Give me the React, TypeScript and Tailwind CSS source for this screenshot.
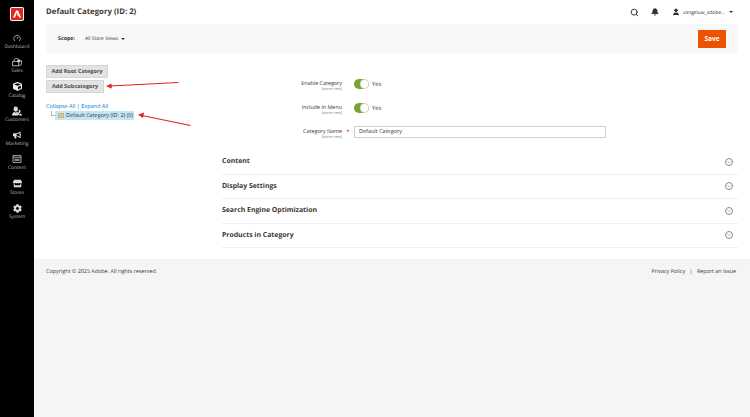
import { Search, Bell, User, ChevronDown } from 'lucide-react';
import { FaCog, FaBullhorn, FaCube, FaStore } from 'react-icons/fa';
import type { ReactNode } from 'react';

const CustomersIcon = () => (
  <svg width="10" height="10" viewBox="0 0 16 16" fill="#ddd">
    <path d="M6 1a3.400 3.400 0 0 1 3.400 3.600C9.400 7 8 8.800 6 8.800S2.600 7 2.600 4.600A3.400 3.400 0 0 1 6 1zM0 15c0-3.400 2.400-5 4.400-5.400l1.600 1 1.600-1c2 .4 3.400 1.600 3.800 3.400L10 15z" />
    <path d="M11 5.500a2.600 2.600 0 0 1 2.600 2.800c0 1.800-1.100 3.200-2.600 3.200-.5 0-1-.2-1.400-.5 1-.8 1.400-2.200 1.400-5.500zM12 12l1 .1c1.400.4 2.600 1.200 3 2.900h-4.400z" />
  </svg>
);

const navItems: { label: string; icon: ReactNode }[] = [
  {
    label: 'Dashboard',
    icon: (
      <svg width="8" height="8" viewBox="0 0 16 16" fill="none" stroke="#aaa" strokeWidth="1.800">
        <path d="M3.500 14a6.500 6.500 0 1 1 9 0M8 10l1.500-4" />
      </svg>
    ),
  },
  {
    label: 'Sales',
    icon: (
      <svg width="10" height="9" viewBox="0 0 18 16" fill="none" stroke="#ccc" strokeWidth="1.500">
        <path d="M1 6h11v8H1zM12 7l5-2.500v7L12 14M4 6a4 4 0 0 1 8-3" />
        <circle cx="12" cy="5" r="3" fill="#ccc" stroke="none" />
      </svg>
    ),
  },
  { label: 'Catalog', icon: <FaCube size={9} color="#eee" /> },
  { label: 'Customers', icon: <CustomersIcon /> },
  { label: 'Marketing', icon: <FaBullhorn size={8} color="#ddd" /> },
  {
    label: 'Content',
    icon: (
      <svg width="10" height="8" viewBox="0 0 16 14" fill="none" stroke="#ccc" strokeWidth="1.400">
        <path d="M1 1h14v12H1zM1 4h14" />
        <path d="M3.500 6.500h9v4h-9z" fill="#888" stroke="none" />
      </svg>
    ),
  },
  { label: 'Stores', icon: <FaStore size={9} color="#ddd" /> },
  { label: 'System', icon: <FaCog size={9} color="#ddd" /> },
];

const sections = ['Content', 'Display Settings', 'Search Engine Optimization', 'Products in Category'];

const FieldLabel = ({ label }: { label: string }) => (
  <div className="w-[120px] text-right leading-none pt-[3px]">
    <div className="text-[5.400px] text-[#41362f]">{label}</div>
    <div className="text-[3.800px] text-[#808080] mt-[1.500px]">[store view]</div>
  </div>
);

const Toggle = ({ label }: { label: string }) => (
  <div className="flex items-start h-[24px]">
    <FieldLabel label={label} />
    <div className="ml-[12px] w-[15px] h-[10px] rounded-full bg-[#79a22e] flex justify-end mt-[1px]">
      <div className="w-[9px] h-[10px] rounded-full bg-white border border-[#dcdcdc]" />
    </div>
    <span className="ml-[3px] text-[5.800px] text-[#41362f] leading-none mt-[3.500px]">Yes</span>
  </div>
);

const Arrow = ({ className, viewBox, line, head }: { className: string; viewBox: string; line: string; head: string }) => (
  <svg className={className} viewBox={viewBox} fill="none">
    <path d={line} stroke="#e0241c" strokeWidth="1.100" />
    <path d={head} fill="#e0241c" />
  </svg>
);

export default function App() {
  return (
    <div className="relative flex w-[750px] h-[417px] overflow-hidden bg-white font-['Open_Sans',sans-serif] [text-rendering:geometricPrecision]">
      <aside className="w-[34px] shrink-0 bg-black flex flex-col items-center pt-[7px]">
        <div className="w-[14px] h-[14px] rounded-[2px] bg-white flex items-center justify-center mb-[12px]">
          <div className="w-[12px] h-[12px] rounded-[1px] bg-[#e1251b] flex items-center justify-center">
            <svg width="8" height="8" viewBox="0 0 8 8">
              <path d="M3 0.500H5L8 7.500H6.200L5.400 5.600H3.600L4.600 4.200 4 2.600 2 7.500H0z" fill="#fff" />
            </svg>
          </div>
        </div>
        {navItems.map((n) => (
          <div key={n.label} className="h-[24.300px] w-full flex flex-col items-center justify-start">
            <div className="h-[10px] flex items-center justify-center">{n.icon}</div>
            <span className="text-[4.800px] leading-none mt-[2px] text-[#b8b8b8]">{n.label}</span>
          </div>
        ))}
      </aside>

      <div className="flex-1 min-w-0 flex flex-col">
        <main className="h-[259px] px-[12px] shrink-0">
          <header className="h-[24px] flex items-center">
            <h1 className="text-[7.800px] font-bold text-[#41362f] leading-none pt-[2px]">Default Category (ID: 2)</h1>
            <div className="ml-auto flex items-center text-[#303030]">
              <Search size={9} strokeWidth={2.500} />
              <Bell size={8} strokeWidth={2.500} fill="#303030" className="ml-[12px]" />
              <User size={8} strokeWidth={2.500} fill="#303030" className="ml-[13px]" />
              <span className="text-[4.900px] ml-[3px] leading-none pt-[2px]">vangeluw_adobe...</span>
              <span className="ml-[4px] mr-[5px] w-0 h-0 border-x-[2px] border-x-transparent border-t-[2.500px] border-t-[#303030]" />
            </div>
          </header>

          <div className="h-[29px] bg-[#f8f8f8] flex items-center px-[12px]">
            <span className="text-[5.300px] font-bold text-[#41362f] leading-none pt-[1px]">Scope:</span>
            <span className="text-[4.900px] text-[#41362f] ml-[10px] leading-none pt-[2px]">All Store Views</span>
            <span className="ml-[3px] w-0 h-0 border-x-[2px] border-x-transparent border-t-[2.500px] border-t-[#41362f]" />
            <button className="ml-auto w-[28px] h-[18px] bg-[#eb5202] text-white text-[6.500px] font-bold">Save</button>
          </div>

          <div className="flex pt-[12px]">
            <div className="w-[176px] shrink-0">
              <button className="block h-[13px] w-[62px] bg-[#e3e3e3] border border-[#d6d6d6] text-[5.500px] font-bold text-[#514943]">Add Root Category</button>
              <button className="block h-[13px] w-[58px] mt-[2px] bg-[#e3e3e3] border border-[#d6d6d6] text-[5.500px] font-bold text-[#514943]">Add Subcategory</button>
              <div className="text-[5.500px] text-[#007bdb] mt-[10.500px] leading-none">
                Collapse All <span className="text-[#41362f]">|</span> Expand All
              </div>
              <div className="flex items-center ml-[5px] mt-[1.500px]">
                <div className="w-[4px] h-[5px] border-l border-b border-[#b5b5b5] mb-[5px]" />
                <div className="h-[9px] bg-[#c3e6f6] flex items-center pl-[3px] w-[79px]">
                  <span className="w-[6px] h-[5px] bg-[#e0c98c] border border-[#c9b47c] shrink-0" />
                  <span className="text-[5.500px] text-[#41362f] ml-[2px] whitespace-nowrap">Default Category (ID: 2) (0)</span>
                </div>
              </div>
            </div>

            <div className="flex-1 min-w-0 pt-[13px]">
              <Toggle label="Enable Category" />
              <Toggle label="Include in Menu" />
              <div className="flex items-start h-[24px]">
                <FieldLabel label="Category Name" />
                <span className="w-[12px] text-center text-[#e22626] text-[6px] leading-none pt-[3px]">*</span>
                <div className="w-[252px] h-[12px] -mt-[0.500px] border border-[#d2d2d2] text-[5.500px] text-[#41362f] flex items-center pl-[4px]">Default Category</div>
              </div>
              {sections.map((s) => (
                <div key={s} className="h-[24.500px] border-b border-[#efefef] flex items-center justify-between first:h-[23.500px] pr-[5px]">
                  <span className="text-[6.900px] font-bold text-[#41362f] pt-[1px]">{s}</span>
                  <span className="w-[8px] h-[8px] rounded-full border border-[#8a8a8a] flex items-center justify-center">
                    <ChevronDown size={6} strokeWidth={2} color="#777" />
                  </span>
                </div>
              ))}
            </div>
          </div>
        </main>

        <footer className="flex-1 bg-[#f5f5f5] pl-[12px] pr-[14px] pt-[8px] flex justify-between text-[5.400px] text-[#41362f]">
          <span>Copyright © 2025 Adobe. All rights reserved.</span>
          <span>Privacy Policy <span className="mx-[3px]">|</span> Report an Issue</span>
        </footer>
      </div>

      <Arrow
        className="absolute left-[106px] top-[81px] w-[73px] h-[8px]"
        viewBox="0 0 73 8"
        line="M4 5 L72.500 1.500"
        head="M0 5.200 L5.500 2.500 L5.800 7.500z"
      />
      <Arrow
        className="absolute left-[138px] top-[112px] w-[53px] h-[14px]"
        viewBox="0 0 53 14"
        line="M4 3.500 L52.500 13.500"
        head="M0 2.800 L6 0.500 L5 6z"
      />
    </div>
  );
}
